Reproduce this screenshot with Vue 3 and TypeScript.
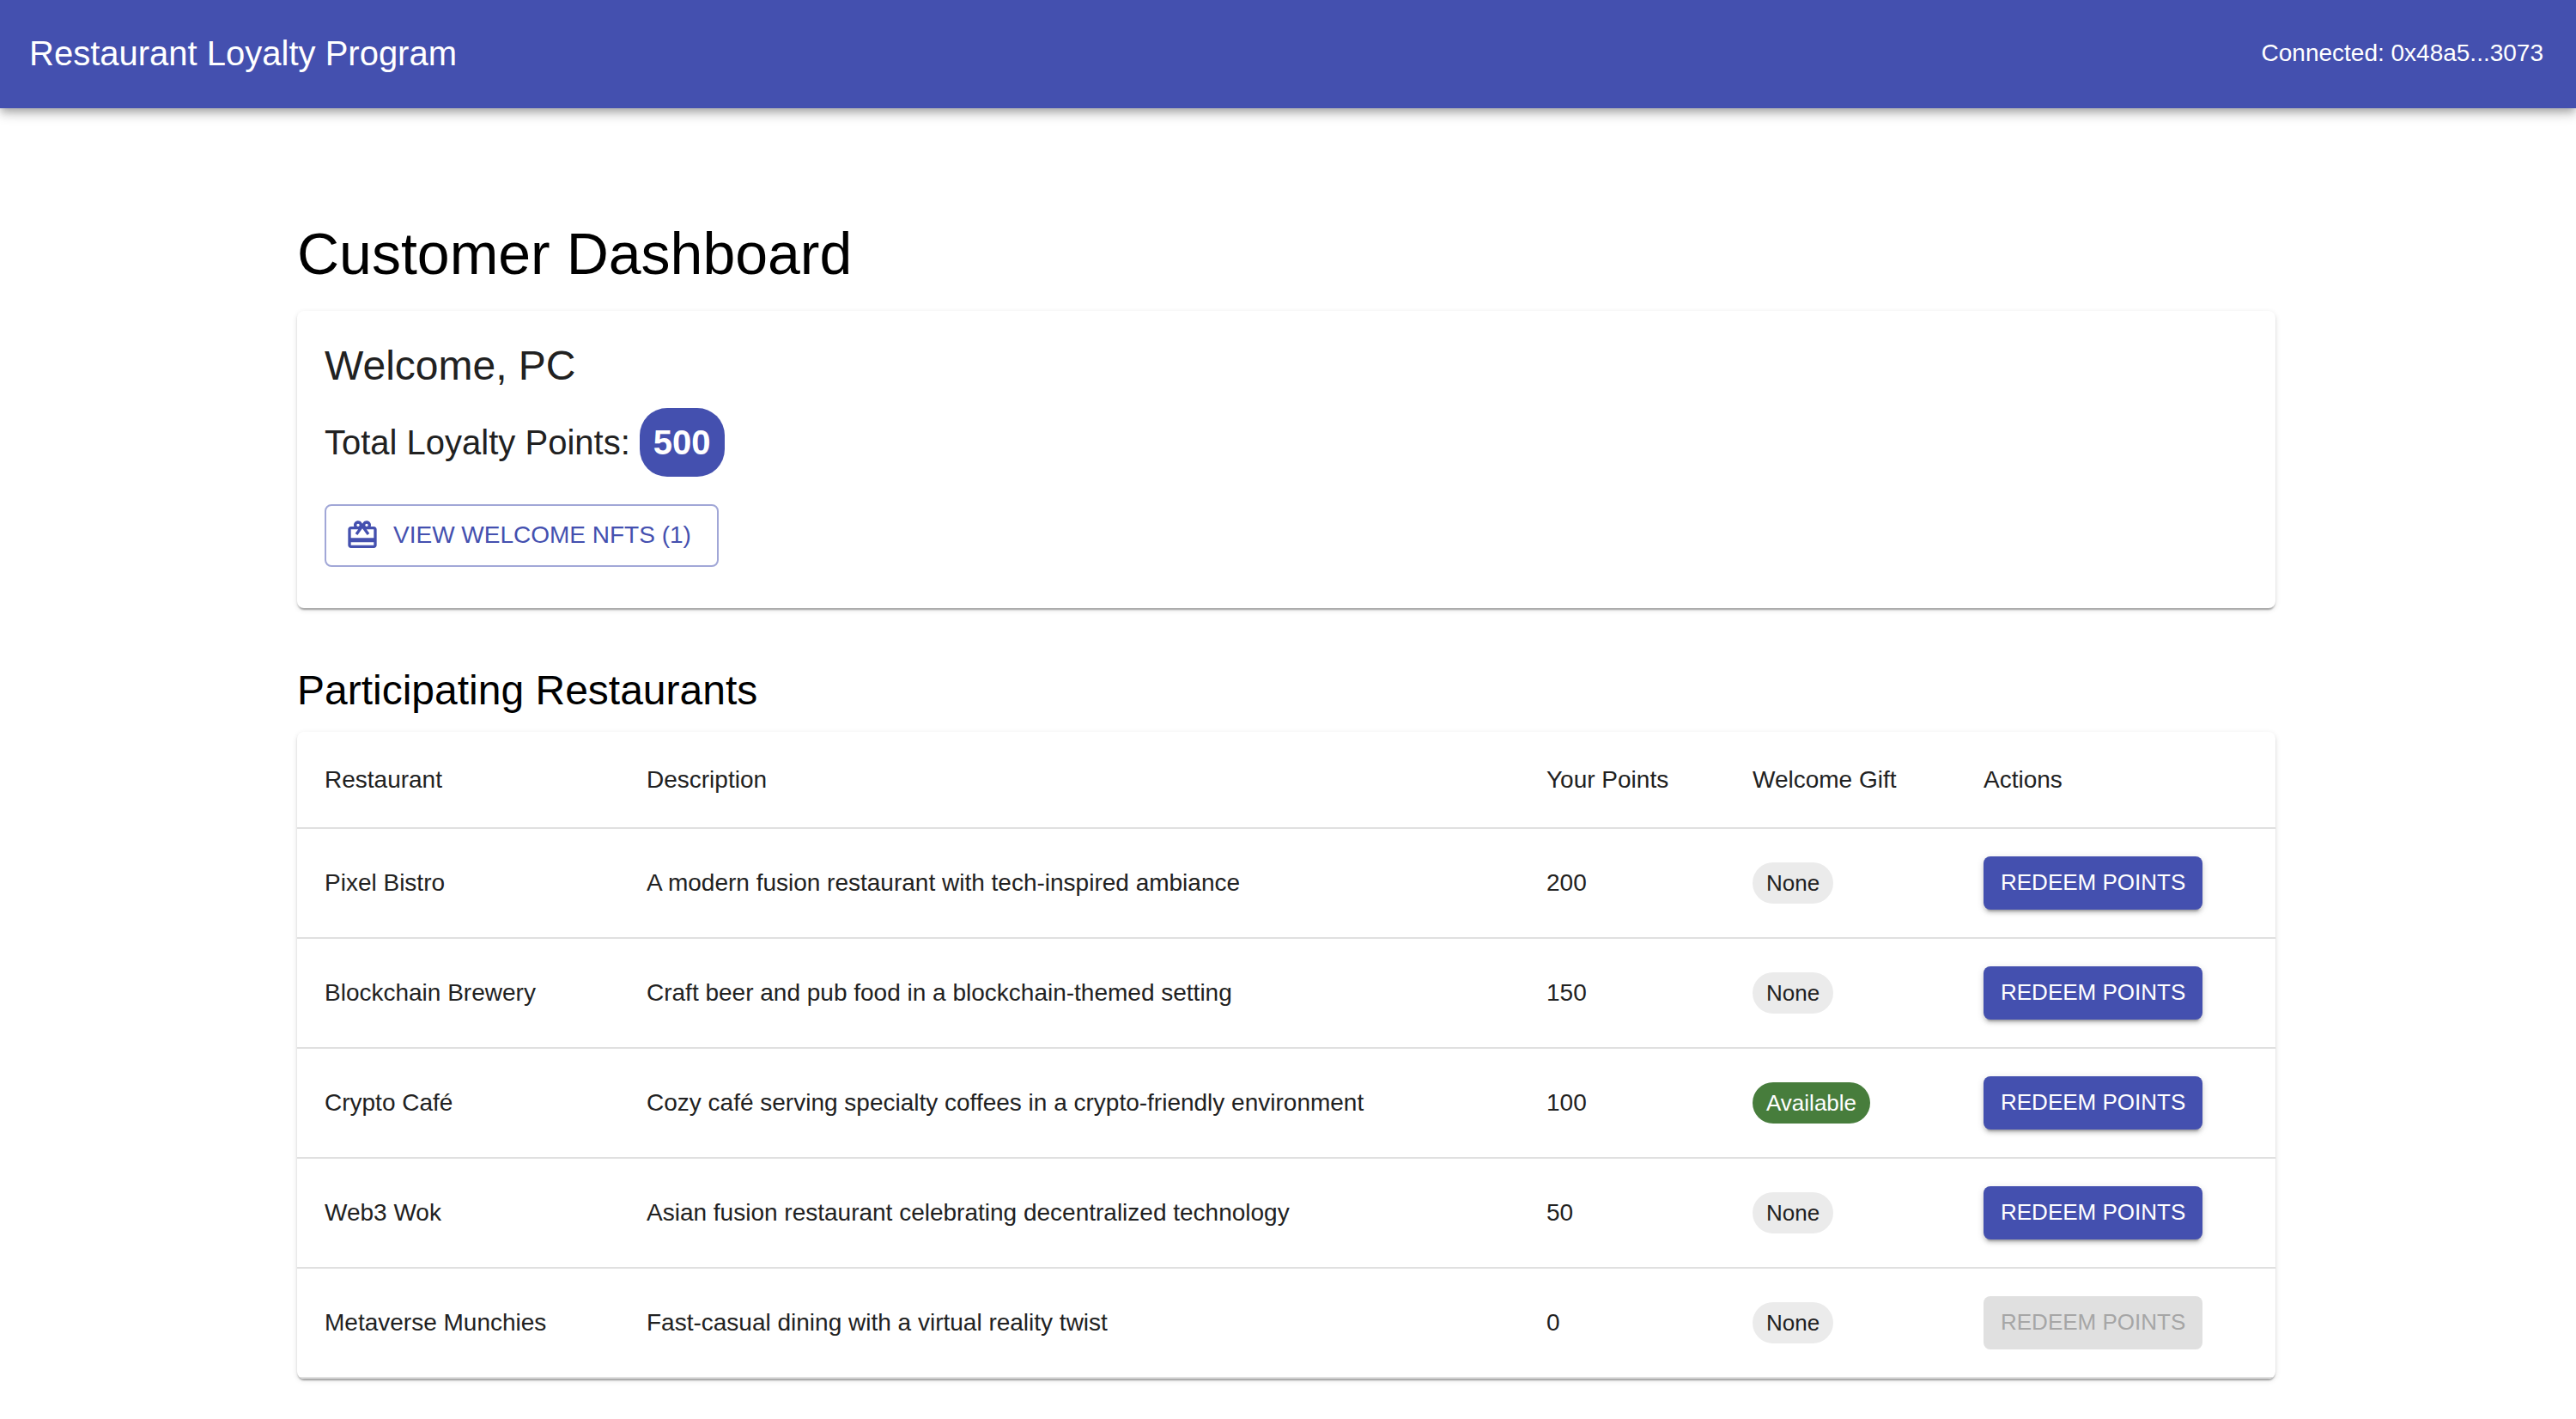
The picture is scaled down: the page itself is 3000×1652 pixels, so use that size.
<script setup lang="ts">
interface Restaurant {
  name: string
  description: string
  points: number
  gift: boolean
}

const account = '0x48a5...3073'
const customer = 'PC'
const nftCount = 1

const restaurants: Restaurant[] = [
  { name: 'Pixel Bistro', description: 'A modern fusion restaurant with tech-inspired ambiance', points: 200, gift: false },
  { name: 'Blockchain Brewery', description: 'Craft beer and pub food in a blockchain-themed setting', points: 150, gift: false },
  { name: 'Crypto Café', description: 'Cozy café serving specialty coffees in a crypto-friendly environment', points: 100, gift: true },
  { name: 'Web3 Wok', description: 'Asian fusion restaurant celebrating decentralized technology', points: 50, gift: false },
  { name: 'Metaverse Munchies', description: 'Fast-casual dining with a virtual reality twist', points: 0, gift: false },
]

const totalPoints = restaurants.reduce((sum, r) => sum + r.points, 0)
</script>

<template>
  <div class="app">
    <header class="app-bar">
      <div class="brand">Restaurant Loyalty Program</div>
      <div class="account">Connected: {{ account }}</div>
    </header>

    <main class="container">
      <h1 class="page-title">Customer Dashboard</h1>

      <section class="paper welcome">
        <h2 class="section-title">Welcome, {{ customer }}</h2>
        <p class="total">
          <span>Total Loyalty Points:</span>
          <strong class="badge">{{ totalPoints }}</strong>
        </p>
        <button type="button" class="outlined">
          <svg class="icon" viewBox="0 0 24 24" aria-hidden="true">
            <path
              d="M20 6h-2.18c.11-.31.18-.65.18-1 0-1.66-1.34-3-3-3-1.05 0-1.96.54-2.5 1.35l-.5.67-.5-.68C10.96 2.54 10.05 2 9 2 7.34 2 6 3.34 6 5c0 .35.07.69.18 1H4c-1.11 0-1.99.89-1.99 2L2 19c0 1.11.89 2 2 2h16c1.11 0 2-.89 2-2V8c0-1.11-.89-2-2-2m-5-2c.55 0 1 .45 1 1s-.45 1-1 1-1-.45-1-1 .45-1 1-1M9 4c.55 0 1 .45 1 1s-.45 1-1 1-1-.45-1-1 .45-1 1-1m11 15H4v-2h16zm0-5H4V8h5.08L7 10.83 8.62 12 11 8.76l1-1.36 1 1.36L15.38 12 17 10.83 14.92 8H20z"
            />
          </svg>
          <span>VIEW WELCOME NFTS ({{ nftCount }})</span>
        </button>
      </section>

      <h2 id="restaurants-title" class="section-title restaurants-title">Participating Restaurants</h2>

      <div class="paper table-paper">
        <table aria-labelledby="restaurants-title">
          <colgroup>
            <col class="col-name" />
            <col />
            <col class="col-points" />
            <col class="col-gift" />
            <col class="col-actions" />
          </colgroup>
          <thead>
            <tr>
              <th scope="col">Restaurant</th>
              <th scope="col">Description</th>
              <th scope="col">Your Points</th>
              <th scope="col">Welcome Gift</th>
              <th scope="col">Actions</th>
            </tr>
          </thead>
          <tbody>
            <tr v-for="r in restaurants" :key="r.name">
              <td>{{ r.name }}</td>
              <td>{{ r.description }}</td>
              <td>{{ r.points }}</td>
              <td>
                <span class="chip" :class="{ available: r.gift }">{{ r.gift ? 'Available' : 'None' }}</span>
              </td>
              <td>
                <button type="button" class="contained" :disabled="r.points === 0">REDEEM POINTS</button>
              </td>
            </tr>
          </tbody>
        </table>
      </div>
    </main>
  </div>
</template>

<style>
body {
  background: #fff;
}
</style>

<style scoped>
.app {
  font-family: 'Liberation Sans', Arial, Helvetica, sans-serif;
  color: #000;
}

.app-bar {
  display: flex;
  align-items: center;
  justify-content: space-between;
  box-sizing: border-box;
  height: 126px;
  padding: 0 38px 2px 34px;
  background: #4450af;
  color: #fff;
  box-shadow:
    0 4px 8px -2px rgba(0, 0, 0, 0.2),
    0 8px 10px 0 rgba(0, 0, 0, 0.14),
    0 2px 20px 0 rgba(0, 0, 0, 0.12);
}

.brand {
  font-size: 40px;
  line-height: 64px;
}

.account {
  font-size: 28px;
  line-height: 40px;
}

.container {
  box-sizing: border-box;
  max-width: 2404px;
  margin: 0 auto;
  padding: 128px 52px 32px 48px;
}

.page-title {
  margin: 0 0 26px;
  font-size: 68px;
  font-weight: 400;
  line-height: 82px;
}

.section-title {
  margin: 0 0 17px;
  font-size: 48px;
  font-weight: 400;
  line-height: 64px;
}

.paper {
  background: #fff;
  color: #212121;
  border-radius: 8px;
  box-shadow:
    0 4px 2px -2px rgba(0, 0, 0, 0.2),
    0 2px 2px 0 rgba(0, 0, 0, 0.14),
    0 2px 6px 0 rgba(0, 0, 0, 0.12);
}

.welcome {
  padding: 32px 32px 48px;
}

.total {
  display: flex;
  align-items: center;
  gap: 11px;
  margin: 0 0 32px;
  font-size: 40px;
  line-height: 64px;
}

.badge {
  padding: 8px 16px;
  border-radius: 32px;
  background: #4450af;
  color: #fff;
}

.outlined {
  display: flex;
  align-items: center;
  gap: 16px;
  box-sizing: border-box;
  height: 73px;
  padding: 0 30px 1px 22px;
  border: 2px solid #a1a7d7;
  border-radius: 8px;
  background: transparent;
  color: #4450af;
  font-family: inherit;
  font-size: 28px;
  line-height: 48px;
  cursor: pointer;
}

.icon {
  width: 40px;
  height: 40px;
  fill: currentColor;
}

.restaurants-title {
  margin: 64px 0 16px;
}

.table-paper {
  overflow: hidden;
}

table {
  width: 100%;
  table-layout: fixed;
  border-spacing: 0;
  border-collapse: separate;
  font-size: 28px;
  line-height: 40px;
}

.col-name {
  width: 375px;
}

.col-points {
  width: 240px;
}

.col-gift {
  width: 269px;
}

.col-actions {
  width: 372px;
}

th,
td {
  box-sizing: border-box;
  padding: 0 32px;
  border-bottom: 2px solid #e0e0e0;
  font-weight: 400;
  text-align: left;
  vertical-align: middle;
}

th {
  height: 113px;
}

td {
  height: 128px;
}

.chip {
  display: inline-block;
  padding: 0 16px;
  border-radius: 24px;
  background: #ebebeb;
  font-size: 26px;
  line-height: 48px;
  vertical-align: middle;
}

.chip.available {
  background: #477d3c;
  color: #fff;
}

.contained {
  display: block;
  height: 62px;
  padding: 0 20px 2px;
  border: 0;
  border-radius: 8px;
  background: #4450af;
  color: #fff;
  font-family: inherit;
  font-size: 26px;
  line-height: 45px;
  white-space: nowrap;
  cursor: pointer;
  box-shadow:
    0 6px 2px -4px rgba(0, 0, 0, 0.2),
    0 4px 4px 0 rgba(0, 0, 0, 0.14),
    0 2px 10px 0 rgba(0, 0, 0, 0.12);
}

.contained:disabled {
  background: #e0e0e0;
  color: #a6a6a6;
  box-shadow: none;
  cursor: default;
}
</style>
